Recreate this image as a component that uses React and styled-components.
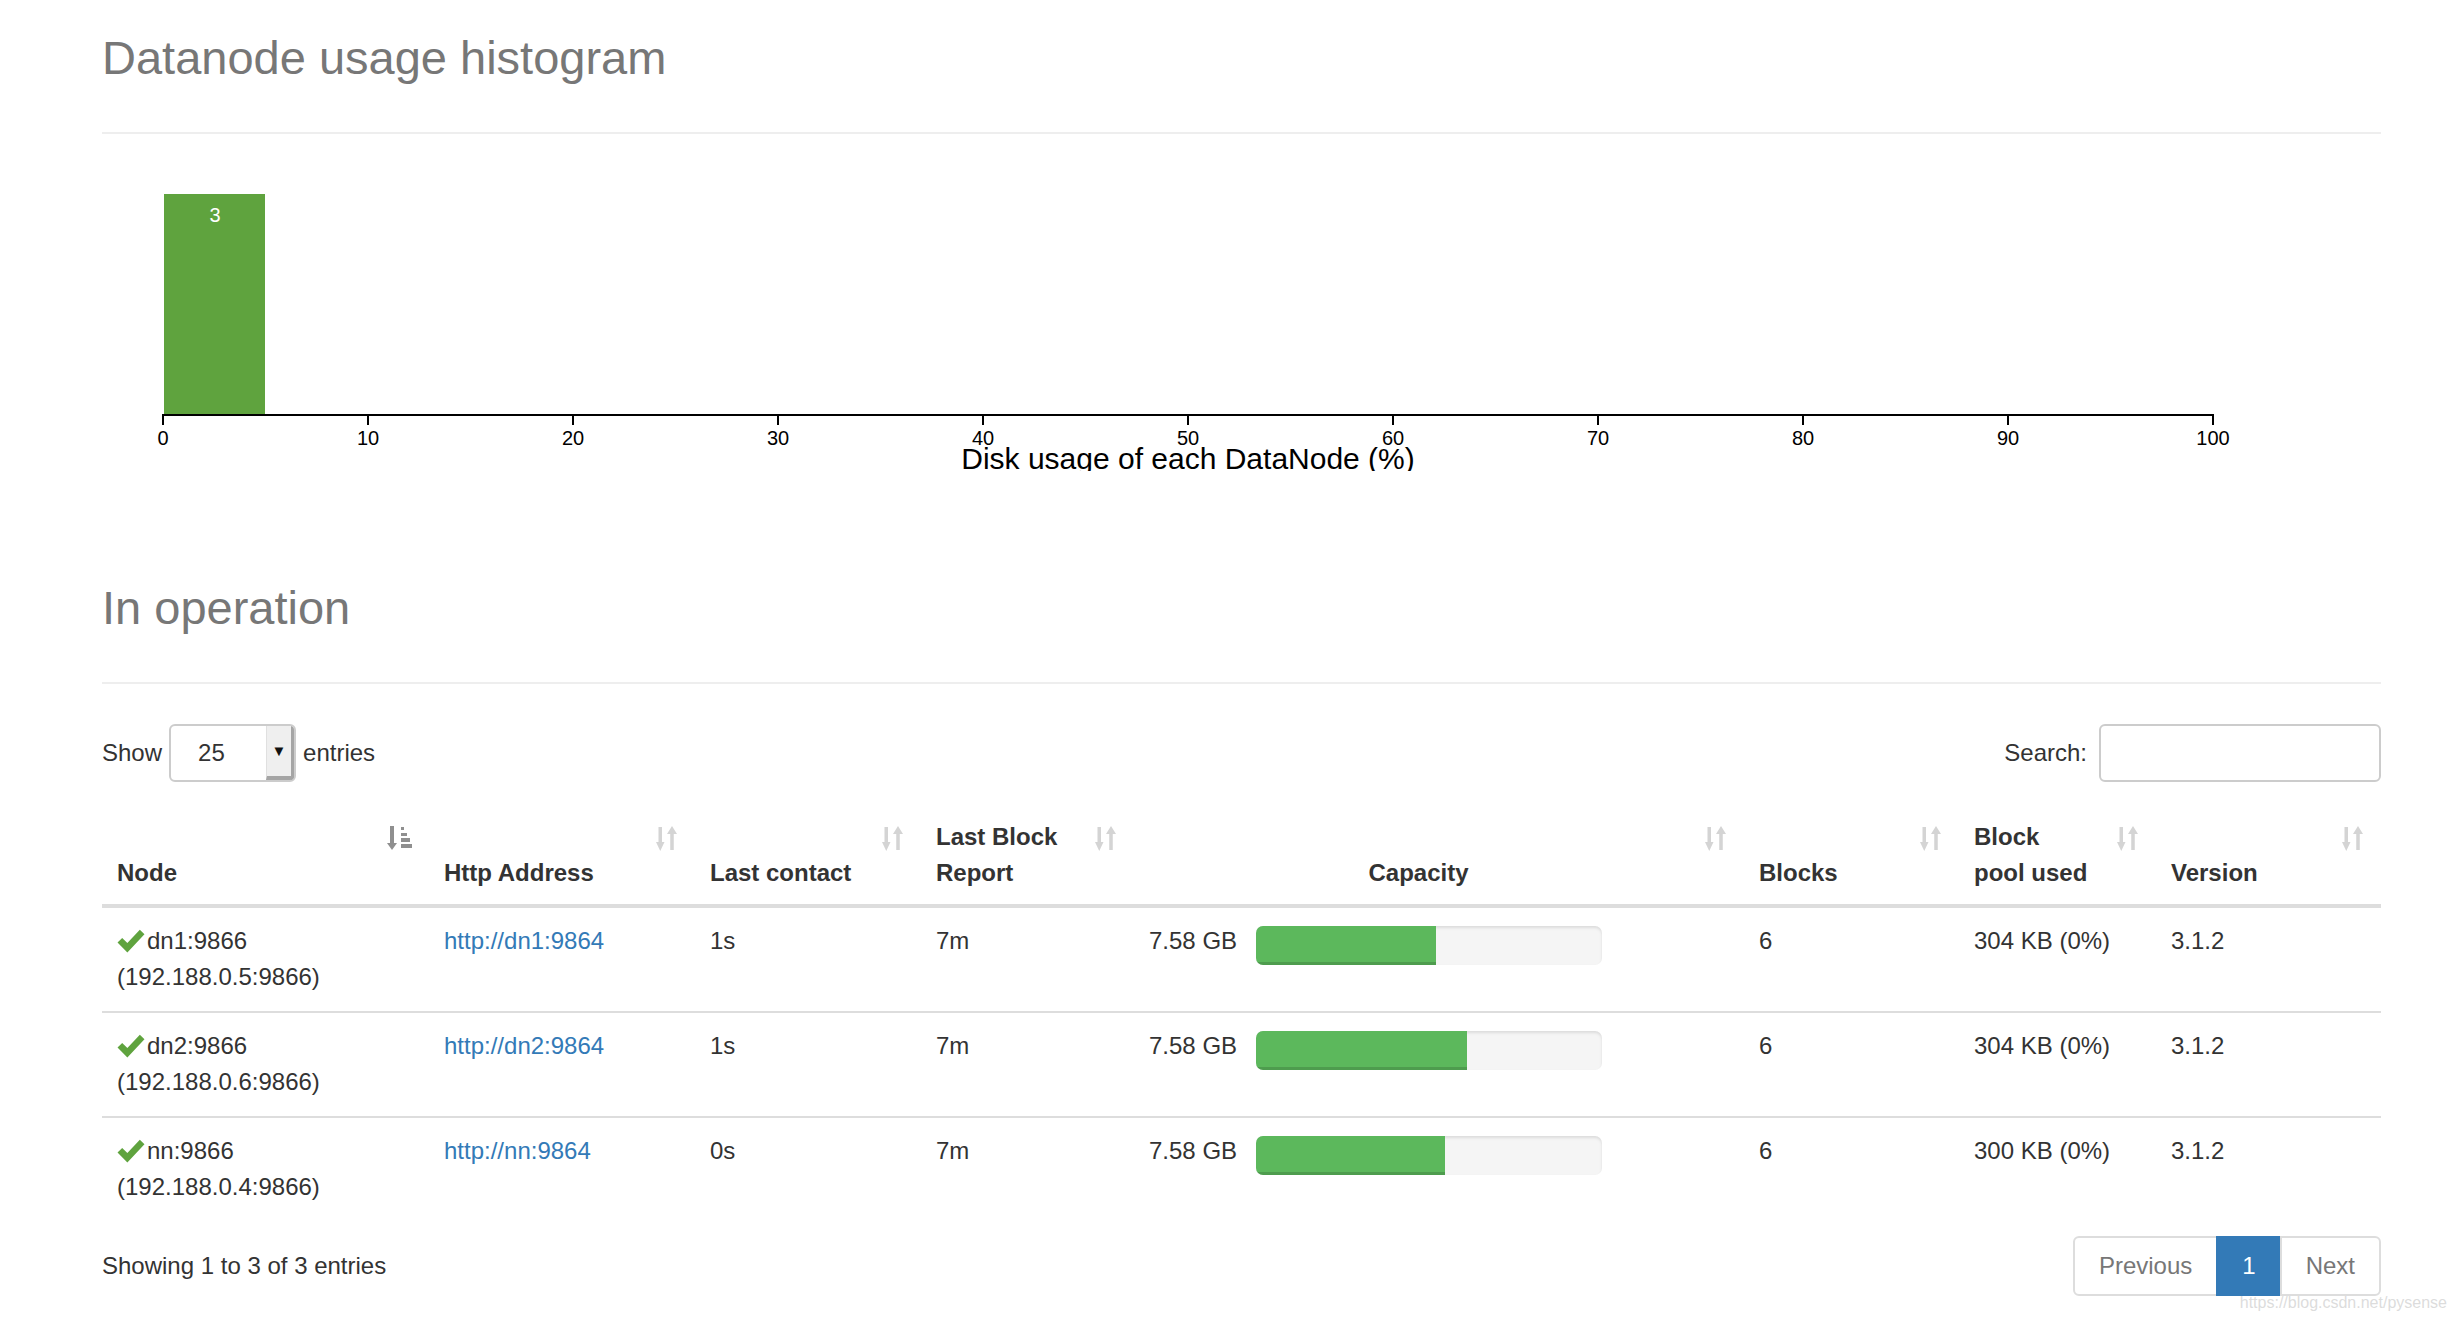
import React from "react";
import styled, { createGlobalStyle } from "styled-components";

const GlobalStyle = createGlobalStyle`
  body {
    margin: 0;
    background: #fff;
    color: #333;
    font-family: "Liberation Sans", Helvetica, Arial, sans-serif;
    font-size: 24px;
    line-height: 36px;
  }
`;

const Page = styled.div`
  position: relative;
  display: flow-root;
  width: 2279px;
  height: 1322px;
  margin-left: 102px;
`;

const PageHeader = styled.div`
  margin-top: ${(p) => p.top}px;
  padding-bottom: 49px;
  border-bottom: 2px solid #eee;
`;

const Title = styled.h1`
  margin: 0;
  font-size: 47px;
  line-height: 51px;
  font-weight: normal;
  color: #777;
`;

const Chart = styled.svg`
  display: block;
  font-family: "Liberation Sans", Helvetica, Arial, sans-serif;
`;

const Controls = styled.div`
  display: flex;
  justify-content: space-between;
  align-items: center;
  margin-top: 40px;
  height: 58px;
`;

const Label = styled.label`
  display: flex;
  align-items: center;
  gap: ${(p) => p.gap || 8}px;
`;

const Select = styled.div`
  display: flex;
  align-items: stretch;
  box-sizing: border-box;
  width: 127px;
  height: 58px;
  border: 2px solid #ccc;
  border-radius: 6px;
  background: #fff;
  overflow: hidden;
`;

const SelectValue = styled.span`
  flex: 1;
  padding-left: 27px;
  line-height: 54px;
`;

const SelectButton = styled.span`
  display: flex;
  align-items: center;
  justify-content: center;
  box-sizing: border-box;
  width: 28px;
  background: #efefef;
  border-left: 1px solid #e0e0e0;
  border-right: 3px solid #a5a5a5;
  border-bottom: 4px solid #a5a5a5;
  font-size: 15px;
  color: #111;
`;

const SearchInput = styled.input`
  box-sizing: border-box;
  width: 282px;
  height: 58px;
  border: 2px solid #ccc;
  border-radius: 6px;
  outline: none;
  font: inherit;
`;

const Table = styled.table`
  width: 100%;
  margin-top: 21px;
  border-collapse: collapse;
  table-layout: fixed;
`;

const Th = styled.th`
  position: relative;
  padding: 16px 56px 13px 15px;
  vertical-align: bottom;
  text-align: ${(p) => (p.center ? "center" : "left")};
  font-weight: bold;
  border-bottom: 4px solid #ddd;
`;

const SortIcon = styled.svg`
  position: absolute;
  top: 23px;
  right: 17px;
`;

const Td = styled.td`
  padding: 15px 15px 16px;
  vertical-align: top;
  border-top: ${(p) => (p.first ? 0 : "2px solid #ddd")};
`;

const CheckIcon = styled.svg`
  vertical-align: -4px;
  margin-right: 2px;
`;

const Link = styled.a`
  color: #337ab7;
  text-decoration: none;
`;

const CapacityCell = styled.div`
  display: flex;
  align-items: flex-start;
  gap: 19px;
`;

const CapacityText = styled.span`
  width: 88px;
  text-align: right;
  white-space: nowrap;
`;

const Progress = styled.div`
  width: 346px;
  height: 39px;
  margin-top: 3px;
  border-radius: 7px;
  background: #f5f5f5;
  box-shadow: inset 0 2px 3px rgba(0, 0, 0, 0.1);
  overflow: hidden;
`;

const ProgressBar = styled.div`
  height: 100%;
  background: #5cb85c;
  box-shadow: inset 0 -3px 0 rgba(0, 0, 0, 0.15);
`;

const Footer = styled.div`
  display: flex;
  justify-content: space-between;
  align-items: center;
  margin-top: 15px;
`;

const Pagination = styled.ul`
  display: flex;
  margin: 0;
  padding: 0;
  list-style: none;
`;

const PageItem = styled.li`
  padding: 10px 24px;
  border: 2px solid ${(p) => (p.active ? "#337ab7" : "#ddd")};
  margin-left: -2px;
  background: ${(p) => (p.active ? "#337ab7" : "#fff")};
  color: ${(p) => (p.active ? "#fff" : "#777")};
  &:first-child {
    margin-left: 0;
    border-radius: 6px 0 0 6px;
  }
  &:last-child {
    border-radius: 0 6px 6px 0;
  }
`;

const Watermark = styled.span`
  position: absolute;
  top: 1292px;
  right: -66px;
  font-size: 16px;
  line-height: 22px;
  color: rgba(214, 214, 214, 0.85);
  white-space: nowrap;
`;

const columns = [
  { title: "Node", width: 327, sorted: true },
  { title: "Http Address", width: 266 },
  { title: "Last contact", width: 226 },
  { title: ["Last Block", "Report"], width: 213 },
  { title: "Capacity", width: 610, center: true },
  { title: "Blocks", width: 215 },
  { title: ["Block", "pool used"], width: 197 },
  { title: "Version", width: 225 },
];

const nodes = [
  { name: "dn1:9866", ip: "192.188.0.5:9866", http: "http://dn1:9864", contact: "1s", report: "7m", used: 52, blocks: 6, pool: "304 KB (0%)" },
  { name: "dn2:9866", ip: "192.188.0.6:9866", http: "http://dn2:9864", contact: "1s", report: "7m", used: 61, blocks: 6, pool: "304 KB (0%)" },
  { name: "nn:9866", ip: "192.188.0.4:9866", http: "http://nn:9864", contact: "0s", report: "7m", used: 54.6, blocks: 6, pool: "300 KB (0%)" },
];

const ticks = [0, 10, 20, 30, 40, 50, 60, 70, 80, 90, 100];
const x0 = 61;
const unit = 20.5;
const axisY = 281;

const Histogram = () => (
  <Chart width="2279" height="337">
    <rect x={x0 + 1} y="60" width="101" height={axisY - 60} fill="#5fa33e" />
    <text x={x0 + 52} y="88" fill="#fff" fontSize="20" textAnchor="middle">3</text>
    <path d={`M${x0},${axisY + 10}V${axisY}H${x0 + 100 * unit}V${axisY + 10}`} stroke="#000" strokeWidth="2" fill="none" />
    {ticks.map((t) => (
      <g key={t}>
        <line x1={x0 + t * unit} x2={x0 + t * unit} y1={axisY} y2={axisY + 10} stroke="#000" strokeWidth="2" />
        <text x={x0 + t * unit} y="311" fontSize="20" textAnchor="middle" fill="#000">{t}</text>
      </g>
    ))}
    <text x={x0 + 50 * unit} y="335" fontSize="30" textAnchor="middle" fill="#000">
      Disk usage of each DataNode (%)
    </text>
  </Chart>
);

const SortGlyph = () => (
  <SortIcon width="22" height="25" viewBox="0 0 22 25" fill="#d4d4d4">
    <rect x="2.5" y="1" width="3.5" height="16" />
    <polygon points="0,16 8.5,16 4.25,25" />
    <polygon points="11,8 21,8 16,0" />
    <rect x="14.25" y="8" width="3.5" height="16" />
  </SortIcon>
);

const SortAscGlyph = () => (
  <SortIcon width="25" height="25" viewBox="0 0 25 25" fill="#8f8f8f">
    <rect x="3" y="0" width="4" height="17" />
    <polygon points="0,17 10,17 5,24" />
    <rect x="14" y="1" width="3" height="3" />
    <rect x="14" y="7" width="6" height="3" />
    <rect x="14" y="12" width="9" height="4" />
    <rect x="14" y="18" width="11" height="4" />
  </SortIcon>
);

const Check = () => (
  <CheckIcon width="28" height="26" viewBox="0 0 27 25">
    <path d="M0.5 15 L5 10.5 L10 15.5 L22 2.5 L26.5 7 L10 24.5 Z" fill="#5fa33e" />
  </CheckIcon>
);

const App = () => (
  <>
    <GlobalStyle />
    <Page>
      <PageHeader top={32}>
        <Title>Datanode usage histogram</Title>
      </PageHeader>
      <Histogram />

      <PageHeader top={111}>
        <Title>In operation</Title>
      </PageHeader>

      <Controls>
        <Label gap={7}>
          Show
          <Select>
            <SelectValue>25</SelectValue>
            <SelectButton>▼</SelectButton>
          </Select>
          entries
        </Label>
        <Label gap={12}>
          Search:
          <SearchInput type="search" />
        </Label>
      </Controls>

      <Table>
        <colgroup>
          {columns.map((c, i) => (
            <col key={i} style={{ width: c.width }} />
          ))}
        </colgroup>
        <thead>
          <tr>
            {columns.map((c, i) => (
              <Th key={i} center={c.center}>
                {Array.isArray(c.title) ? (
                  <>
                    {c.title[0]}
                    <br />
                    {c.title[1]}
                  </>
                ) : (
                  c.title
                )}
                {c.sorted ? <SortAscGlyph /> : <SortGlyph />}
              </Th>
            ))}
          </tr>
        </thead>
        <tbody>
          {nodes.map((n, i) => (
            <tr key={n.name}>
              <Td first={i === 0}>
                <Check />
                {n.name}
                <br />({n.ip})
              </Td>
              <Td first={i === 0}>
                <Link href="#">{n.http}</Link>
              </Td>
              <Td first={i === 0}>{n.contact}</Td>
              <Td first={i === 0}>{n.report}</Td>
              <Td first={i === 0}>
                <CapacityCell>
                  <CapacityText>7.58 GB</CapacityText>
                  <Progress>
                    <ProgressBar style={{ width: `${n.used}%` }} />
                  </Progress>
                </CapacityCell>
              </Td>
              <Td first={i === 0}>{n.blocks}</Td>
              <Td first={i === 0}>{n.pool}</Td>
              <Td first={i === 0}>3.1.2</Td>
            </tr>
          ))}
        </tbody>
      </Table>

      <Footer>
        <span>Showing 1 to 3 of 3 entries</span>
        <Pagination>
          <PageItem>Previous</PageItem>
          <PageItem active>1</PageItem>
          <PageItem>Next</PageItem>
        </Pagination>
      </Footer>
      <Watermark>https://blog.csdn.net/pysense</Watermark>
    </Page>
  </>
);

export default App;
